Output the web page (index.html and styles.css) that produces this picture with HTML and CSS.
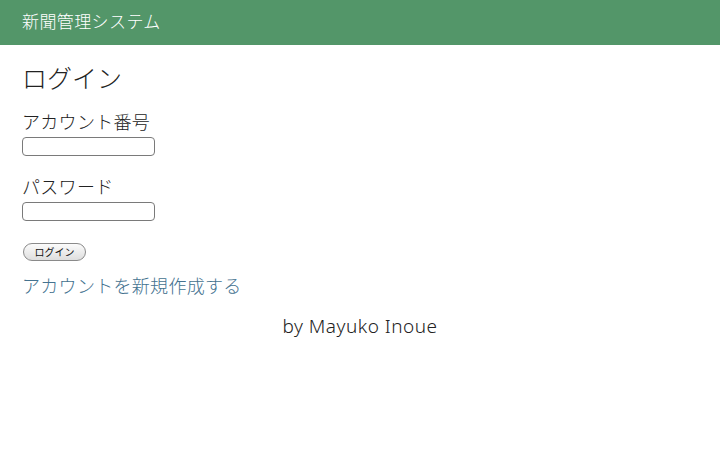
FILE: index.html
```html
<!DOCTYPE html>
<html lang="ja">
<head>
<meta charset="utf-8">
<title>ログイン</title>
<link rel="stylesheet" href="styles.css">
</head>
<body>
<header class="topbar">新聞管理システム</header>
<main class="content">
  <h1 class="title">ログイン</h1>
  <form class="login-form">
    <label class="field-label">アカウント番号</label>
    <input class="field-input" type="text">
    <label class="field-label second">パスワード</label>
    <input class="field-input" type="password">
    <button class="login-btn" type="button">ログイン</button>
  </form>
  <a class="signup-link" href="#">アカウントを新規作成する</a>
</main>
<footer class="credit">by Mayuko Inoue</footer>
</body>
</html>
```

FILE: styles.css
```css
html, body {
  margin: 0;
  padding: 0;
  background: #ffffff;
}
body {
  font-family: "Noto Sans", "Noto Sans CJK JP", sans-serif;
  color: #222;
}
.topbar {
  height: 45px;
  background: #539669;
  color: #ffffff;
  font-size: 17px;
  font-weight: 300;
  letter-spacing: 0.4px;
  line-height: 44px;
  padding-left: 22px;
  box-sizing: border-box;
}
.content {
  padding: 0 22px;
  display: flex;
  flex-direction: column;
  align-items: flex-start;
}
.title {
  margin: 17px 0 0 0;
  font-size: 25px;
  font-weight: 300;
  line-height: 32px;
  color: #222;
}
.login-form {
  display: flex;
  flex-direction: column;
  align-items: flex-start;
  margin-top: 16px;
}
.field-label {
  font-size: 18px;
  font-weight: 300;
  letter-spacing: 0.3px;
  line-height: 24px;
  color: #222;
}
.field-label.second {
  margin-top: 19px;
}
.field-input {
  margin: 3px 0 0 0;
  width: 133px;
  height: 19px;
  box-sizing: border-box;
  border: 1px solid #7a7a7a;
  border-radius: 4px;
  padding: 0 4px;
  background: #fff;
}
.login-btn {
  margin: 22px 0 0 1px;
  width: 63px;
  height: 18px;
  box-sizing: border-box;
  border: 1px solid #8a8a8a;
  border-radius: 9px;
  background: linear-gradient(#fbfbfb, #dedede);
  font-family: "Noto Sans CJK JP", sans-serif;
  font-size: 10px;
  line-height: 14px;
  padding: 0;
  color: #111;
}
.signup-link {
  margin-top: 13px;
  font-size: 18px;
  font-weight: 300;
  letter-spacing: 0.3px;
  line-height: 24px;
  color: #44728f;
  text-decoration: none;
}
.credit {
  margin-top: 16px;
  text-align: center;
  font-size: 19px;
  font-weight: 300;
  letter-spacing: 0.5px;
  line-height: 24px;
  color: #222;
}
```
